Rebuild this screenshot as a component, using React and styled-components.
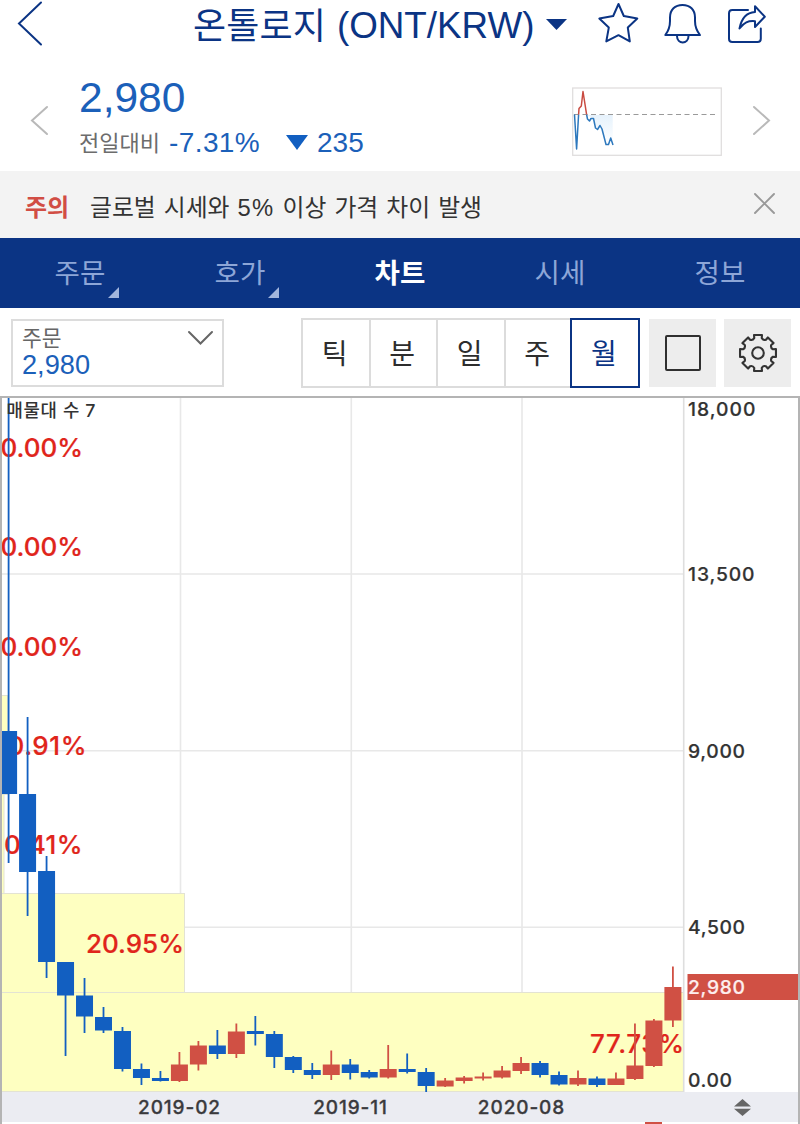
import React from 'react';
import styled, { createGlobalStyle, css } from 'styled-components';

const theme = {
  navy: '#0b3484',
  blue: '#125fc1',
  priceBlue: '#1b60b9',
  red: '#d05044',
  percent: '#e0251b',
  grid: '#e8e8e8',
  band: '#feffc1',
  axis: '#ebecf2',
};

const GlobalStyle = createGlobalStyle`
  * {
    box-sizing: border-box;
  }
  body {
    margin: 0;
    background: white;
    font-family: 'Liberation Sans', 'Noto Sans CJK KR', sans-serif;
  }
  button {
    font-family: inherit;
    border: none;
    border-radius: 0;
    padding: 0;
    margin: 0;
    background: none;
  }
`;

const Screen = styled.div`
  width: 800px;
  height: 1124px;
  overflow: hidden;
  display: flex;
  flex-direction: column;
  background: white;
`;

const Icon = styled.svg`
  display: block;
  flex: none;
  overflow: visible;
`;

const Header = styled.header`
  height: 52px;
  flex: none;
  display: flex;
  align-items: flex-start;
  padding-left: 18px;
  color: ${theme.navy};
`;

const Title = styled.h1`
  margin: 0 0 0 151px;
  width: 378px;
  flex: none;
  display: flex;
  align-items: center;
  height: 50px;
  font-size: 36px;
  font-weight: 400;
  line-height: 42px;
  white-space: nowrap;
`;

const Coin = styled.span`
  letter-spacing: 0.1px;
  line-height: 46px;
  padding-top: 3px;
`;

const Pair = styled.span`
  margin-left: 11px;
  margin-top: 1px;
  font-size: 36.8px;
`;

const TitleCaret = styled(Icon)`
  margin-left: 12px;
  margin-top: -2px;
`;

const HeaderIcons = styled.div`
  display: flex;
  align-items: flex-start;
  gap: 26px;
  padding-top: 2px;
  margin-left: 27px;
`;

const Summary = styled.section`
  height: 119px;
  flex: none;
  display: flex;
  align-items: center;
  padding: 18px 30px 0 31px;
`;

const Quote = styled.div`
  margin-left: 31px;
  width: 493px;
  padding-bottom: 2px;
  color: ${theme.priceBlue};
`;

const Price = styled.div`
  font-size: 42.5px;
  line-height: 46px;
`;

const ChangeRow = styled.div`
  display: flex;
  align-items: center;
  height: 44px;
  font-size: 28px;
`;

const ChangeLabel = styled.span`
  width: 90px;
  padding-bottom: 3px;
  font-size: 22px;
  color: #6c6c6c;
`;

const Rate = styled.span`
  width: 117px;
  letter-spacing: 0.4px;
`;

const Amount = styled.span`
  margin-left: 9px;
`;

const MiniChart = styled.svg`
  display: block;
  flex: none;
  width: 150px;
  height: 69px;
  margin-top: 2px;
  margin-right: 31px;
`;

const Notice = styled.div`
  height: 67px;
  flex: none;
  display: flex;
  align-items: center;
  padding: 2px 24px 0 25px;
  background: #f3f3f3;
  font-size: 23.8px;
  color: #333;
`;

const NoticeTag = styled.strong`
  width: 65px;
  font-size: 24px;
  color: #d14d44;
`;

const NoticeText = styled.span`
  flex: 1;
  word-spacing: 1.5px;
  white-space: nowrap;
`;

const NoticeRate = styled.span`
  letter-spacing: 1.2px;
`;

const Tabs = styled.nav`
  height: 70px;
  flex: none;
  display: grid;
  grid-template-columns: repeat(5, 1fr);
  background: ${theme.navy};
`;

const Tab = styled.button`
  position: relative;
  padding-bottom: 5px;
  font-size: 27.6px;
  color: #8da6d7;
  ${({ $active }) => $active && css`
    color: white;
    font-weight: bold;
  `}
  ${({ $more }) => $more && css`
    &::after {
      content: '';
      position: absolute;
      right: 41px;
      bottom: 10px;
      border-left: 11px solid transparent;
      border-bottom: 11px solid #a3b6dd;
    }
  `}
`;

const Toolbar = styled.div`
  height: 88px;
  flex: none;
  display: flex;
  align-items: flex-start;
  padding: 10px 9px 0 11px;
`;

const OrderSelect = styled.button`
  display: flex;
  justify-content: space-between;
  width: 213px;
  height: 68px;
  margin-top: 1px;
  padding: 7px 9px 0 9px;
  border: 2px solid #dcdcdc;
  text-align: left;
`;

const OrderLabel = styled.div`
  font-size: 21.5px;
  line-height: 23px;
  color: #666;
`;

const OrderValue = styled.div`
  font-size: 27.2px;
  line-height: 28px;
  color: ${theme.priceBlue};
`;

const Periods = styled.div`
  display: flex;
  margin-left: 77px;
`;

const Period = styled.button`
  width: 67.5px;
  height: 70px;
  padding-bottom: 3px;
  padding-right: 2px;
  border: 2px solid #dcdcdc;
  border-right: none;
  font-size: 28px;
  color: #2d2d2d;
  ${({ $active }) => $active && css`
    width: 70px;
    margin-left: -1px;
    border: 2px solid ${theme.navy};
    color: ${theme.navy};
  `}
`;

const ToolButton = styled.button`
  display: flex;
  align-items: center;
  justify-content: center;
  width: 67px;
  height: 68px;
  margin-top: 1px;
  margin-left: ${({ $gap }) => $gap}px;
  background: #ededed;
`;

const ChartPanel = styled.section`
  flex: 1;
  border: 2px solid #b4b4b4;
  border-bottom: none;
  overflow: hidden;
`;

const Plot = styled.svg`
  display: block;
  font-family: 'Inter', 'Noto Sans CJK KR', sans-serif;
`;

const TimeAxis = styled.div`
  display: flex;
  align-items: center;
  height: 30px;
  padding-left: 92px;
  background: ${theme.axis};
  font-family: 'Inter', sans-serif;
  font-size: 19px;
  font-weight: 500;
  letter-spacing: 0.9px;
  color: #3a3a3d;
  -webkit-text-stroke: 0.3px #3a3a3d;
`;

const TimeLabel = styled.span`
  width: 171px;
  text-align: center;
`;

const Resize = styled(Icon)`
  margin-left: 126.5px;
`;

const Arrow = ({ w, h, d, color, stroke }) => (
  <Icon width={w} height={h} fill="none" stroke={color} strokeWidth={stroke} strokeLinecap="round" strokeLinejoin="miter">
    <path d={d} />
  </Icon>
);

// open/close edges and wick ends, in chart pixels from the top of the page
const candles = [
  ['b', 731, 794, 396, 863],
  ['b', 794, 872, 717, 916],
  ['b', 871, 962, 856, 978],
  ['b', 962, 995.5, 962, 1056],
  ['b', 995.5, 1016.5, 978, 1033],
  ['b', 1017, 1030.5, 1007, 1033],
  ['b', 1031, 1069, 1027, 1071.5],
  ['b', 1069, 1078, 1063.5, 1085],
  ['b', 1078, 1081, 1071, 1081.5],
  ['r', 1064.5, 1081, 1052, 1082],
  ['r', 1045.5, 1064.5, 1041, 1070.5],
  ['b', 1045.5, 1054, 1030, 1059],
  ['r', 1031.5, 1054, 1023.5, 1058],
  ['b', 1031, 1034, 1016, 1045.5],
  ['b', 1034, 1057, 1031, 1068],
  ['b', 1057, 1070, 1056, 1073],
  ['b', 1070, 1075, 1063, 1079],
  ['r', 1064.5, 1075, 1050.5, 1080],
  ['b', 1064.5, 1073, 1059, 1079.5],
  ['b', 1072, 1077.5, 1070, 1078.5],
  ['r', 1069, 1077.5, 1045, 1078.5],
  ['b', 1069, 1072, 1053.5, 1073.5],
  ['b', 1072, 1086, 1068, 1092],
  ['r', 1080.5, 1086.5, 1078, 1087],
  ['r', 1077.5, 1081, 1076, 1083.5],
  ['r', 1076.5, 1078.5, 1072.5, 1080.5],
  ['r', 1070.5, 1077.5, 1066, 1078.5],
  ['r', 1063, 1071, 1057, 1074],
  ['b', 1063, 1075, 1061, 1077.5],
  ['b', 1075, 1084.5, 1071.5, 1085.5],
  ['r', 1078, 1084.5, 1070.5, 1086],
  ['b', 1078.5, 1085, 1076.5, 1087],
  ['r', 1078.5, 1085, 1072.5, 1085],
  ['r', 1065.5, 1079, 1023.5, 1080],
  ['r', 1020.5, 1066, 1019, 1067],
  ['r', 987, 1020.5, 966.5, 1027],
];

const volumes = [
  { text: '0.00%', x: 0.5, y: 457, w: 82.5 },
  { text: '0.00%', x: 0.5, y: 556, w: 82.5 },
  { text: '0.00%', x: 0.5, y: 656, w: 82.5 },
  { text: '0.91%', x: 7.5, y: 755, w: 79 },
  { text: '0.41%', x: 4, y: 854, w: 78.5 },
  { text: '20.95%', x: 86, y: 953, w: 98 },
  { text: '77.73%', x: 590, y: 1052.5, w: 94 },
];

const prices = [
  { text: '18,000', y: 416.4, w: 67.5 },
  { text: '13,500', y: 581.4, w: 66.5 },
  { text: '9,000', y: 758, w: 57 },
  { text: '4,500', y: 934.4, w: 57 },
  { text: '0.00', y: 1087.4, w: 44 },
];

const periods = ['틱', '분', '일', '주', '월'];

const tabs = [
  { name: '주문', more: true },
  { name: '호가', more: true },
  { name: '차트', active: true },
  { name: '시세' },
  { name: '정보' },
];

// eight flat teeth with a rounded notch between each pair
const gearPath = () => {
  const pts = [];
  for (let i = 0; i < 8; i += 1) {
    const base = i * 45 - 90;
    [[-14, 15.4], [-12.5, 18.4], [12.5, 18.4], [14, 15.4]].forEach(([a, r]) => {
      const t = ((base + a) * Math.PI) / 180;
      pts.push(`${(20 + r * Math.cos(t)).toFixed(2)} ${(20 + r * Math.sin(t)).toFixed(2)}`);
    });
  }
  const outline = pts.map((point, i) => {
    if (i === 0) return `M${point}`;
    return i % 4 === 0 ? `A3.6 3.6 0 0 0 ${point}` : `L${point}`;
  });
  return `${outline.join('')}A3.6 3.6 0 0 0 ${pts[0]}Z`;
};

const CandleChart = () => (
  <Plot width="796" height="694" viewBox="2 398 796 694">
    <g stroke={theme.grid} strokeWidth="1.6">
      <path d="M180.5 398V1092M351.3 398V1092M522 398V1092" />
      <path d="M2 574H683M2 750.7H683M2 927.3H683" />
    </g>
    <g fill={theme.band} stroke="#e3e3d3" strokeWidth="1">
      <rect x="1" y="695.5" width="6.5" height="99" />
      <rect x="1" y="794.5" width="3" height="99" />
      <rect x="1" y="893.5" width="183.5" height="99" />
      <rect x="1" y="992.5" width="682.5" height="99" />
    </g>
    <path d="M683.7 398V1092" stroke="#dedede" strokeWidth="1.6" />
    <g fill={theme.percent} stroke={theme.percent} strokeWidth="0.2" fontSize="26" fontWeight="500">
      {volumes.map(({ text, x, y, w }) => (
        <text key={y} x={x} y={y} textLength={w}>{text}</text>
      ))}
    </g>
    {candles.map(([kind, top, bottom, high, low], i) => {
      const x = 8.6 + i * 18.98;
      const color = kind === 'b' ? theme.blue : theme.red;
      return (
        <g key={i} fill={color}>
          <rect x={x - 0.9} y={high} width="1.8" height={low - high} />
          <rect x={x - 8.5} y={top} width="17" height={bottom - top} />
        </g>
      );
    })}
    <text x="6.5" y="417" fontSize="17.8" fontWeight="500" fill="#333" textLength="89">매물대 수 7</text>
    <g fill="#333" stroke="#333" strokeWidth="0.2" fontSize="19.3" fontWeight="500">
      {prices.map(({ text, y, w }) => (
        <text key={text} x="688" y={y} textLength={w}>{text}</text>
      ))}
    </g>
    <rect x="687.5" y="974" width="111" height="26" fill={theme.red} />
    <text x="688" y="994" fontSize="19.3" fontWeight="500" fill="#fdeeee" stroke="#fdeeee" strokeWidth="0.2" textLength="57">2,980</text>
  </Plot>
);

const App = () => (
  <Screen>
    <GlobalStyle />
    <Header>
      <Arrow w="24" h="48" d="M23 2.5L1 23.5L23 44.5" color={theme.navy} stroke="2" />
      <Title>
        <Coin>온톨로지</Coin>
        <Pair>(ONT/KRW)</Pair>
        <TitleCaret width="21" height="11">
          <path d="M0 0H21L10.5 11Z" fill={theme.navy} />
        </TitleCaret>
      </Title>
      <HeaderIcons>
        <Icon width="40" height="42" fill="none" stroke={theme.navy} strokeWidth="2" strokeLinejoin="round">
          <path d="M20.5 2L25.8 14L39.3 16.6L29.8 25.6L31.8 39.4L20.5 33.2L8.3 39.4L10.8 25.6L1.3 16.6L15.2 14Z" />
        </Icon>
        <Icon width="38" height="42" fill="none" stroke={theme.navy} strokeWidth="2" strokeLinejoin="round">
          <path d="M1.3 33C4.5 29 6 25 6 19V15.5C6 7.5 11 3 18.5 3S31 7.5 31 15.5V19C31 25 32.8 29 36 33Z" />
          <path d="M13 34C13 42.6 24.5 42.6 24.5 34" />
        </Icon>
        <Icon width="40" height="42" fill="none" stroke={theme.navy} strokeWidth="2" strokeLinejoin="round" strokeLinecap="round">
          <path d="M20 8H4.3Q1 8 1 11.3V36.7Q1 40 4.3 40H29.5Q32.8 40 32.8 36.7V26.5" />
          <path d="M11.5 26.5C13.5 16 19.5 10.5 27 10V4.3L36.8 14.7L27 25V19.2C20 18.6 16 20.5 11.5 26.5Z" />
        </Icon>
      </HeaderIcons>
    </Header>
    <Summary>
      <Arrow w="17" h="30" d="M16 1L1 14.5L16 28" color="#b9b9b9" stroke="2" />
      <Quote>
        <Price>2,980</Price>
        <ChangeRow>
          <ChangeLabel>전일대비</ChangeLabel>
          <Rate>-7.31%</Rate>
          <Icon width="22" height="15"><path d="M0 0H22L11 15Z" fill={theme.blue} /></Icon>
          <Amount>235</Amount>
        </ChangeRow>
      </Quote>
      <MiniChart viewBox="572 87 150 69">
        <defs>
          <linearGradient id="fade" x1="0" y1="0" x2="0" y2="1">
            <stop offset="0" stopColor="#e6f2fc" />
            <stop offset="1" stopColor="#fff" />
          </linearGradient>
        </defs>
        <rect x="572.7" y="88" width="148.6" height="67.3" fill="white" stroke="#e0dede" strokeWidth="1.3" />
        <path d="M587 115H612.7V145L610.5 138L608 145H606L600 126L597 129L593 118Z" fill="url(#fade)" />
        <path d="M574 114.5H716" stroke="#9a9a9a" strokeWidth="1.2" strokeDasharray="5 3.5" />
        <g fill="none" strokeWidth="1.5" strokeLinejoin="round">
          <path d="M574.5 114.5L576.6 149L578.6 114.5M586.6 114.5L587.5 119L589.5 121L591 118.5L593.5 118.5L595.5 128L597.5 129.5L600 125.5L602 129L606 144.5L608.5 144.5L610.7 138L613 145" stroke="#2d78bd" />
          <path d="M578.6 114.5L579 108.5L581.3 106L583 91.5L586.6 114.5" stroke="#c94b41" />
        </g>
      </MiniChart>
      <Arrow w="17" h="30" d="M1 1L16 14.5L1 28" color="#b9b9b9" stroke="2" />
    </Summary>
    <Notice>
      <NoticeTag>주의</NoticeTag>
      <NoticeText>글로벌 시세와 <NoticeRate>5%</NoticeRate> 이상 가격 차이 발생</NoticeText>
      <Icon width="23" height="26">
        <path d="M2 1L21 20M21 1L2 20" stroke="#999" strokeWidth="1.9" strokeLinecap="round" />
      </Icon>
    </Notice>
    <Tabs>
      {tabs.map(({ name, more, active }) => (
        <Tab key={name} $more={more} $active={active}>{name}</Tab>
      ))}
    </Tabs>
    <Toolbar>
      <OrderSelect>
        <div>
          <OrderLabel>주문</OrderLabel>
          <OrderValue>2,980</OrderValue>
        </div>
        <Arrow w="26" h="16" d="M2 4L13.5 15.5L25 4" color="#666" stroke="2" />
      </OrderSelect>
      <Periods>
        {periods.map((name) => (
          <Period key={name} $active={name === '월'}>{name}</Period>
        ))}
      </Periods>
      <ToolButton $gap={9}>
        <Icon width="36" height="36" fill="none" stroke="#2f2f2f" strokeWidth="2">
          <rect x="1" y="1" width="34" height="34" rx="1" />
        </Icon>
      </ToolButton>
      <ToolButton $gap={8}>
        <Icon width="40" height="40" fill="none" stroke="#333" strokeWidth="2.1" strokeLinejoin="round">
          <path d={gearPath()} />
          <circle cx="20" cy="20" r="5.8" />
        </Icon>
      </ToolButton>
    </Toolbar>
    <ChartPanel>
      <CandleChart />
      <TimeAxis>
        <TimeLabel>2019-02</TimeLabel>
        <TimeLabel>2019-11</TimeLabel>
        <TimeLabel>2020-08</TimeLabel>
        <Resize width="17" height="17" fill="#666">
          <path d="M0 7.5L8.5 0L17 7.5ZM0 9.8H17L8.5 17Z" />
        </Resize>
      </TimeAxis>
      <Icon width="796" height="2">
        <rect x="643" width="17" height="2" fill={theme.red} />
      </Icon>
    </ChartPanel>
  </Screen>
);

export default App;
